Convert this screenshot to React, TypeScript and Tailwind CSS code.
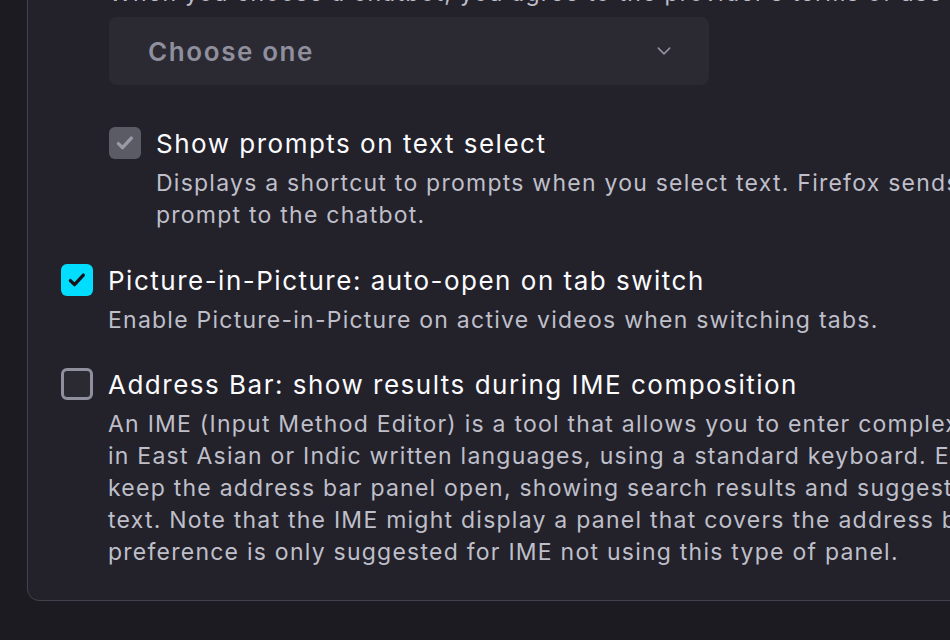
import React from "react";

const font = { fontFamily: "Inter, 'Noto Sans', sans-serif" };

function Check({ state }: { state: "on" | "off" | "disabled" }) {
  if (state === "off") {
    return <div className="h-[32px] w-[32px] shrink-0 rounded-[6px] border-[3px] border-[#8f8f9d] bg-[#2b2a33]" />;
  }
  const box = state === "on" ? "bg-[#00ddff]" : "bg-[#5b5b66]";
  const stroke = state === "on" ? "#15141a" : "#9a9aa6";
  return (
    <div className={`flex h-[32px] w-[32px] shrink-0 items-center justify-center rounded-[6px] ${box}`}>
      <svg width="22" height="22" viewBox="0 0 16 16" fill="none">
        <path d="M3.2 8.4l3 3 6.4-7" stroke={stroke} strokeWidth="2.4" strokeLinecap="round" strokeLinejoin="round" />
      </svg>
    </div>
  );
}

function Option({
  state,
  title,
  lines,
}: {
  state: "on" | "off" | "disabled";
  title: string;
  lines: string[];
}) {
  return (
    <div className="flex gap-[15px]">
      <Check state={state} />
      <div className="min-w-0">
        <div className="whitespace-nowrap text-[26px] leading-[34px] tracking-[1.5px] text-[#fbfbfe]">{title}</div>
        <div className="mt-[6px] text-[23px] leading-[32px] tracking-[1.24px] text-[#bfbfc9]">
          {lines.map((l) => (
            <div key={l} className="whitespace-nowrap">
              {l}
            </div>
          ))}
        </div>
      </div>
    </div>
  );
}

export default function App() {
  return (
    <div className="h-[640px] w-[950px] overflow-hidden bg-[#1c1b22]" style={font}>
      <div className="ml-[27px] -mt-[24px] w-[1200px] rounded-[12px] border border-[#42414d] bg-[#23222b] pb-[32px] pl-[33px]">
        <div className="pl-[48px]">
          <div className="whitespace-nowrap text-[23px] leading-[32px] tracking-[1.24px] text-[#bfbfc9]">
            When you choose a chatbot, you agree to the provider’s terms of use and privacy policy.
          </div>
          <div className="mt-[8px] flex h-[68px] w-[600px] items-center justify-between rounded-[8px] bg-[#2b2a33] pl-[39px] pr-[36px]">
            <span className="text-[26px] font-semibold tracking-[1.6px] text-[#8f8f9d]">Choose one</span>
            <svg width="18" height="18" viewBox="0 0 16 16" fill="none">
              <path d="M3 5.5l5 5 5-5" stroke="#8f8f9d" strokeWidth="1.5" strokeLinecap="round" strokeLinejoin="round" />
            </svg>
          </div>
          <div className="mt-[42px]">
            <Option
              state="disabled"
              title="Show prompts on text select"
              lines={[
                "Displays a shortcut to prompts when you select text. Firefox sends the text, page title, and",
                "prompt to the chatbot.",
              ]}
            />
          </div>
        </div>
        <div className="mt-[33px] flex flex-col gap-[32px]">
          <Option
            state="on"
            title="Picture-in-Picture: auto-open on tab switch"
            lines={["Enable Picture-in-Picture on active videos when switching tabs."]}
          />
          <Option
            state="off"
            title="Address Bar: show results during IME composition"
            lines={[
              "An IME (Input Method Editor) is a tool that allows you to enter complex symbols, such as those used",
              "in East Asian or Indic written languages, using a standard keyboard. Enabling this experiment will",
              "keep the address bar panel open, showing search results and suggestions, while using IME to input",
              "text. Note that the IME might display a panel that covers the address bar results, therefore this",
              "preference is only suggested for IME not using this type of panel.",
            ]}
          />
        </div>
      </div>
    </div>
  );
}
